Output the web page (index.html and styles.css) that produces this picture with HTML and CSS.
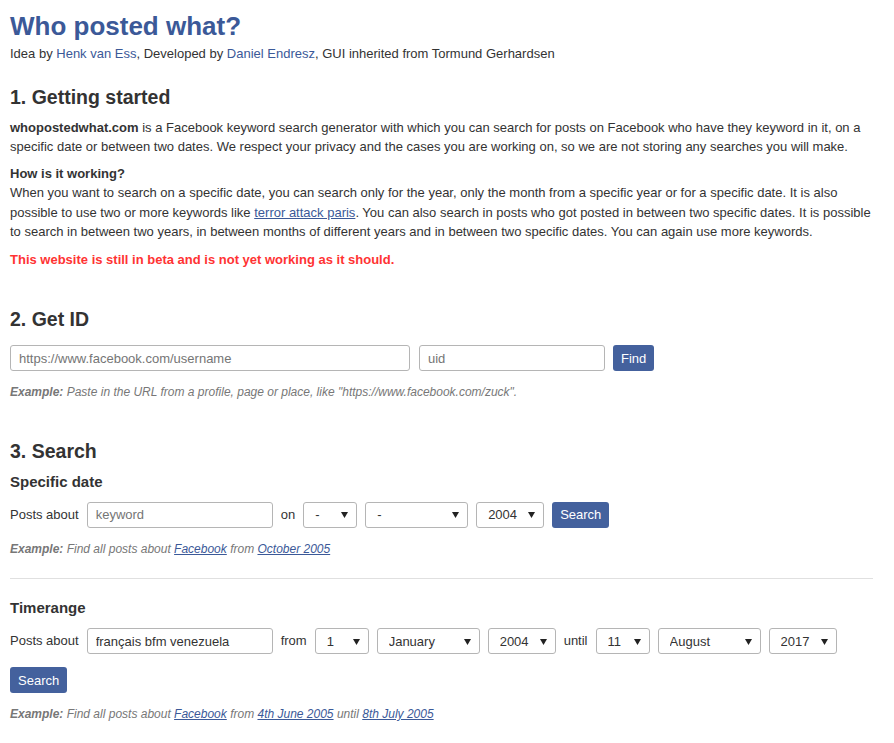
FILE: index.html
```html
<!DOCTYPE html>
<html lang="en">
<head>
<meta charset="utf-8">
<title>Who posted what?</title>
<link rel="stylesheet" href="styles.css">
</head>
<body>
<div class="page">
  <header class="masthead">
    <h1 class="title">Who posted what?</h1>
    <p class="credits">Idea by <a href="#">Henk van Ess</a>, Developed by <a href="#">Daniel Endresz</a>, GUI inherited from Tormund Gerhardsen</p>
  </header>

  <section class="section intro">
    <h2 class="section-title">1. Getting started</h2>
    <p class="text"><strong>whopostedwhat.com</strong> is a Facebook keyword search generator with which you can search for posts on Facebook who have they keyword in it, on a specific date or between two dates. We respect your privacy and the cases you are working on, so we are not storing any searches you will make.</p>
    <p class="text"><strong>How is it working?</strong><br>When you want to search on a specific date, you can search only for the year, only the month from a specific year or for a specific date. It is also possible to use two or more keywords like <a class="inline-link" href="#">terror attack paris</a>. You can also search in posts who got posted in between two specific dates. It is possible to search in between two years, in between months of different years and in between two specific dates. You can again use more keywords.</p>
    <p class="warning">This website is still in beta and is not yet working as it should.</p>
  </section>

  <section class="section getid">
    <h2 class="section-title">2. Get ID</h2>
    <div class="row">
      <input class="field field-url" type="text" placeholder="https://www.facebook.com/username">
      <input class="field field-uid" type="text" placeholder="uid">
      <button class="btn" type="button">Find</button>
    </div>
    <p class="example"><b>Example:</b> Paste in the URL from a profile, page or place, like "https://www.facebook.com/zuck".</p>
  </section>

  <section class="section search">
    <h2 class="section-title">3. Search</h2>
    <h3 class="sub-title">Specific date</h3>
    <div class="row">
      <span class="label">Posts about</span>
      <input class="field field-kw" type="text" placeholder="keyword">
      <span class="label">on</span>
      <select class="sel sel-day"><option>-</option></select>
      <select class="sel sel-month"><option>-</option></select>
      <select class="sel sel-year"><option>2004</option></select>
      <button class="btn" type="button">Search</button>
    </div>
    <p class="example"><b>Example:</b> Find all posts about <a href="#">Facebook</a> from <a href="#">October 2005</a></p>

    <hr class="divider">

    <h3 class="sub-title">Timerange</h3>
    <div class="row">
      <span class="label">Posts about</span>
      <input class="field field-kw" type="text" value="français bfm venezuela">
      <span class="label">from</span>
      <select class="sel sel-day"><option>1</option></select>
      <select class="sel sel-month"><option>January</option></select>
      <select class="sel sel-year"><option>2004</option></select>
      <span class="label">until</span>
      <select class="sel sel-day"><option>11</option></select>
      <select class="sel sel-month"><option>August</option></select>
      <select class="sel sel-year"><option>2017</option></select>
    </div>
    <div class="row row-btn">
      <button class="btn" type="button">Search</button>
    </div>
    <p class="example"><b>Example:</b> Find all posts about <a href="#">Facebook</a> from <a href="#">4th June 2005</a> until <a href="#">8th July 2005</a></p>
  </section>
</div>
</body>
</html>
```

FILE: styles.css
```css
* { box-sizing: border-box; }

body {
  margin: 0;
  background: #fff;
  color: #333;
  font-family: "Liberation Sans", Arial, sans-serif;
  font-size: 13px;
  line-height: 19.5px;
}

.page {
  width: 873px;
  padding: 0 0 0 10px;
}

a { color: #3b5998; text-decoration: none; }

.title {
  margin: 11px 0 0;
  font-size: 26px;
  line-height: 30px;
  font-weight: bold;
  color: #3b5998;
}

.credits { margin: 3px 0 0; }

.section-title {
  margin: 21px 0 9px;
  font-size: 19.5px;
  line-height: 24px;
  font-weight: bold;
  color: #333;
}

.text { margin: 0 0 7px; }

.inline-link { color: #3b5998; text-decoration: underline; }

.warning {
  margin: 8px 0 0;
  color: #ff3333;
  font-weight: bold;
}

.getid .section-title { margin-top: 38px; margin-bottom: 14px; }
.search .section-title { margin-top: 36px; margin-bottom: 9px; }

.row {
  display: flex;
  align-items: center;
  gap: 8px;
}

.field {
  height: 26px;
  border: 1px solid #b5b5b5;
  border-radius: 3px;
  padding: 0 8px;
  font-family: inherit;
  font-size: 13px;
  color: #333;
  background: #fff;
}
.field::placeholder { color: #757575; }

.field-url { width: 400px; }
.field-uid { width: 186px; margin-left: 1px; }
.field-kw { width: 186px; }

.btn {
  height: 26px;
  padding: 0 8px;
  border: 0;
  border-radius: 3px;
  background: #44619d;
  color: #fff;
  font-family: inherit;
  font-size: 13px;
}

.sel {
  appearance: none;
  -webkit-appearance: none;
  height: 26px;
  border: 1px solid #b5b5b5;
  border-radius: 3px;
  padding: 0 20px 0 11px;
  font-family: inherit;
  font-size: 13px;
  color: #333;
  background: #fff url("data:image/svg+xml,%3Csvg xmlns='http://www.w3.org/2000/svg' width='7' height='7'%3E%3Cpath d='M0 1h7L3.5 7z' fill='%23222'/%3E%3C/svg%3E") no-repeat right 8px center;
}
.sel-day { width: 54px; }
.sel-month { width: 103px; }
.sel-year { width: 68px; }

.example {
  margin: 12px 0 0;
  font-size: 12px;
  font-style: italic;
  color: #777;
}
.example b { font-weight: bold; }
.example a { text-decoration: underline; }

.sub-title {
  margin: 0 0 10px;
  font-size: 15px;
  line-height: 20px;
  font-weight: bold;
  color: #333;
}

.divider {
  border: 0;
  border-top: 1px solid #e0e0e0;
  margin: 19px 0 19px;
}

.row-btn { margin-top: 13px; }
```
